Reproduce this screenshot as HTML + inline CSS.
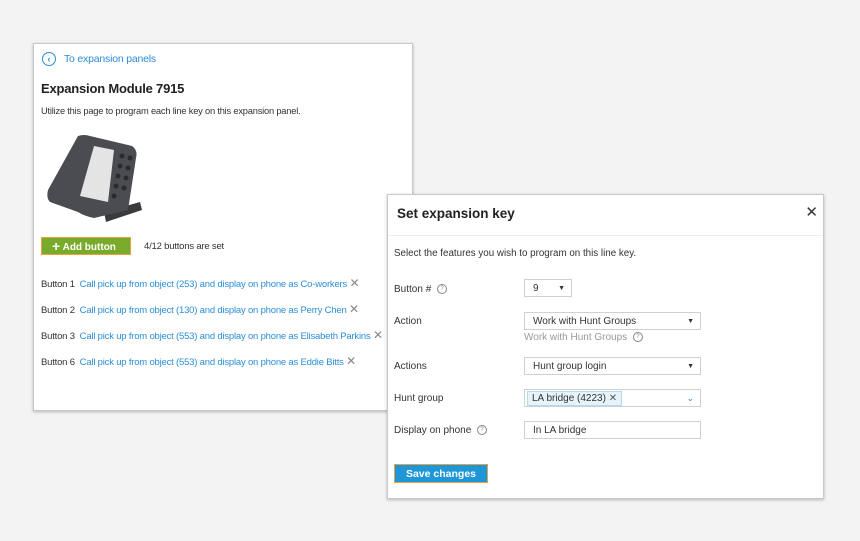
<!DOCTYPE html>
<html><head><style>
body{margin:0;width:860px;height:541px;background:#f3f3f3;font-family:"Liberation Sans",sans-serif;position:relative;overflow:hidden;color:#333}
.p{position:absolute;background:#fff;border:1px solid #c8c8c8;box-shadow:0 1px 3px rgba(0,0,0,.25)}
.a{position:absolute;white-space:nowrap;font-size:9.5px;letter-spacing:-.2px}
.m .a{letter-spacing:0;font-size:10px}
.l{color:#2b8ed6}
.x{color:#888;font-size:12px}
.f{position:absolute;border:1px solid #d0d0d0;background:#fff;height:18px;box-sizing:border-box;font-size:10px;line-height:17px;padding-left:8px}
.ar{position:absolute;right:6px;top:0;font-size:7px}
.q{display:inline-block;width:8px;height:8px;border:1px solid #888;border-radius:50%;font-size:6px;line-height:8px;text-align:center;color:#888;vertical-align:middle;margin-left:3px}
</style></head><body>
<div class="p" style="left:33px;top:43px;width:378px;height:366px">
 <div style="position:absolute;left:8px;top:8px;width:12px;height:12px;border:1.5px solid #2b8ed6;border-radius:50%;color:#2b8ed6;font-size:9px;line-height:12px;text-align:center;font-weight:bold">‹</div>
 <div class="a l" style="left:30px;top:9px;font-size:10.5px">To expansion panels</div>
 <div class="a" style="left:7px;top:37px;font-size:13px;font-weight:bold;color:#222">Expansion Module 7915</div>
 <div class="a" style="left:7px;top:62px;font-size:9.3px">Utilize this page to program each line key on this expansion panel.</div>
 <svg style="position:absolute;left:10px;top:88px" width="100" height="90"><path d="M60 80 L96 70 L98 78 L62 90 Z" fill="#3a3b3e"/><path d="M34 4 Q40 2 46 4 L88 14 Q94 18 92 26 L84 78 L50 86 Q40 84 34 80 L6 70 Q2 66 4 58 Z" fill="#4a4c51"/><path d="M50 14 L70 18 L64 70 L36 64 Z" fill="#e4e4e4"/><g fill="#2a2b2e"><circle cx="78" cy="24" r="2.5"/><circle cx="76" cy="34" r="2.5"/><circle cx="74" cy="44" r="2.5"/><circle cx="72" cy="54" r="2.5"/><circle cx="70" cy="64" r="2.5"/><circle cx="86" cy="26" r="2.5"/><circle cx="84" cy="36" r="2.5"/><circle cx="82" cy="46" r="2.5"/><circle cx="80" cy="56" r="2.5"/></g></svg>
 <div style="position:absolute;left:7px;top:193px;width:90px;height:18px;background:#7aaa2a;border:1px solid #e8a33c;color:#fff;font-size:10px;font-weight:bold;line-height:17px;box-sizing:border-box;padding-left:10px"><span style="font-size:14px;vertical-align:-1px">+</span> Add button</div>
 <div class="a" style="left:110px;top:197px;font-size:9.5px">4/12 buttons are set</div>
 <div class="a" style="left:7px;top:232px">Button 1 &nbsp;<span class="l">Call pick up from object (253) and display on phone as Co-workers</span> <span class="x">✕</span></div>
 <div class="a" style="left:7px;top:258px">Button 2 &nbsp;<span class="l">Call pick up from object (130) and display on phone as Perry Chen</span> <span class="x">✕</span></div>
 <div class="a" style="left:7px;top:284px">Button 3 &nbsp;<span class="l">Call pick up from object (553) and display on phone as Elisabeth Parkins</span> <span class="x">✕</span></div>
 <div class="a" style="left:7px;top:310px">Button 6 &nbsp;<span class="l">Call pick up from object (553) and display on phone as Eddie Bitts</span> <span class="x">✕</span></div>
</div>
<div class="p m" style="left:387px;top:194px;width:435px;height:303px">
 <div class="a" style="left:9px;top:11px;font-size:13.5px;font-weight:bold;color:#222">Set expansion key</div>
 <div class="a" style="right:5px;top:8px;font-size:15px;color:#333">✕</div>
 <div style="position:absolute;left:0;right:0;top:40px;border-top:1px solid #eee"></div>
 <div class="a" style="left:6px;top:53px;font-size:9.8px">Select the features you wish to program on this line key.</div>
 <div class="a" style="left:6px;top:89px">Button # <span class="q">?</span></div>
 <div class="f" style="left:136px;top:84px;width:48px">9<span class="ar">▼</span></div>
 <div class="a" style="left:6px;top:121px">Action</div>
 <div class="f" style="left:136px;top:117px;width:177px">Work with Hunt Groups<span class="ar">▼</span></div>
 <div class="a" style="left:136px;top:137px;color:#999">Work with Hunt Groups <span class="q">?</span></div>
 <div class="a" style="left:6px;top:166px">Actions</div>
 <div class="f" style="left:136px;top:162px;width:177px">Hunt group login<span class="ar">▼</span></div>
 <div class="a" style="left:6px;top:198px">Hunt group</div>
 <div class="f" style="left:136px;top:194px;width:177px;padding-left:2px"><span style="background:#e6f3fa;border:1px solid #b5d9ee;padding:0 4px;line-height:13px;display:inline-block;margin-top:1px">LA bridge (4223) <span style="color:#555">✕</span></span><span class="ar" style="color:#2b8ed6;font-size:9px">⌄</span></div>
 <div class="a" style="left:6px;top:230px">Display on phone <span class="q">?</span></div>
 <div class="f" style="left:136px;top:226px;width:177px">In LA bridge</div>
 <div style="position:absolute;left:6px;top:269px;width:94px;height:19px;background:#1e96d8;border:1px solid #e8a33c;box-sizing:border-box;color:#fff;font-size:10.5px;font-weight:bold;line-height:18px;text-align:center">Save changes</div>
</div>
</body></html>
